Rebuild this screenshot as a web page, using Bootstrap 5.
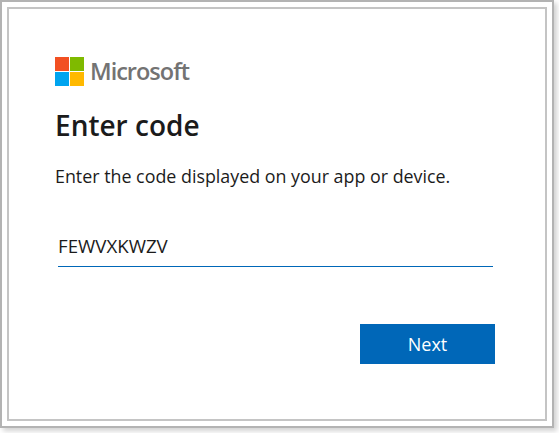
<!DOCTYPE html>
<html lang="en">
<head>
<meta charset="utf-8">
<title>Enter code</title>
<link href="https://cdn.jsdelivr.net/npm/bootstrap@5.3.0/dist/css/bootstrap.min.css" rel="stylesheet">
<style>
html,body{height:100%}
body{background:#fff;font-family:"Open Sans","Noto Sans",sans-serif;color:#1b1b1b}
.shot-outer{width:554px;height:428px;border:1px solid #b3b3b3;border-width:2px;padding:5px;box-shadow:3px 3px 5px rgba(0,0,0,.18);background:#fff}
.shot-inner{width:100%;height:100%;border:2px solid #c4c4c4;padding:47px 50px 0 46px}
.ms-logo{height:30px;gap:6px}
.ms-word{font-size:23.5px;font-weight:600;color:#737373;line-height:30px;letter-spacing:-1px}
.enter-title{font-size:28px;font-weight:600;line-height:36px;margin:21px 0 0;color:#1b1b1b}
.enter-desc{font-size:17.85px;line-height:24px;margin:21px 0 0;color:#1b1b1b}
.code-field{width:435px;height:42px;margin:37px 0 0 3px;border:0;border-bottom:1.5px solid #0067b8;border-radius:0;padding:0;font-size:18.7px;line-height:24px;color:#1b1b1b;outline:0;font-family:inherit}
.next-btn{width:135px;height:40px;background:#0067b8;color:#fff;border:0;border-radius:0;font-size:18px;padding:0}
.next-btn:hover{background:#0067b8;color:#fff}
.btn-zone{margin-top:57px;width:440px}
</style>
</head>
<body>
<div class="shot-outer">
 <div class="shot-inner">
  <div class="ms-logo d-flex align-items-center">
   <svg width="29" height="29" viewBox="0 0 29 29" aria-hidden="true">
    <rect x="0" y="0" width="14" height="14" fill="#f25022"/>
    <rect x="15" y="0" width="14" height="14" fill="#7fba00"/>
    <rect x="0" y="15" width="14" height="14" fill="#00a4ef"/>
    <rect x="15" y="15" width="14" height="14" fill="#ffb900"/>
   </svg>
   <span class="ms-word">Microsoft</span>
  </div>
  <h1 class="enter-title">Enter code</h1>
  <p class="enter-desc">Enter the code displayed on your app or device.</p>
  <input class="code-field d-block" type="text" value="FEWVXKWZV" aria-label="Code">
  <div class="btn-zone d-flex justify-content-end">
   <button class="btn next-btn" type="button">Next</button>
  </div>
 </div>
</div>
<script src="https://cdn.jsdelivr.net/npm/bootstrap@5.3.0/dist/js/bootstrap.bundle.min.js"></script>
</body>
</html>
